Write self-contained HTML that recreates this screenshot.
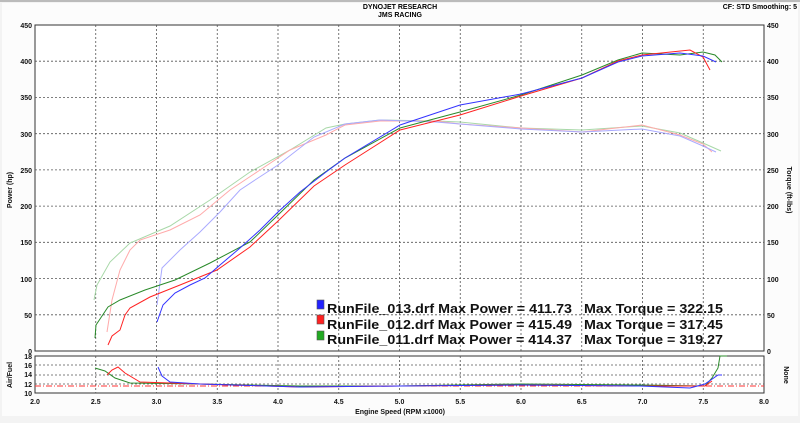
<!DOCTYPE html>
<html><head><meta charset="utf-8"><style>
html,body{margin:0;padding:0;background:#f3f3f3;width:800px;height:423px;overflow:hidden}
svg{display:block}
text{font-family:"Liberation Sans",sans-serif}
</style></head><body>
<svg width="800" height="423" viewBox="0 0 800 423">
<rect x="0" y="0" width="800" height="423" fill="#f3f3f3"/>
<rect x="0" y="0" width="800" height="2" fill="#bbb"/>
<rect x="2" y="3" width="796" height="413" fill="#fcfcfc"/>
<text x="400" y="9" font-size="7" font-weight="bold" text-anchor="middle">DYNOJET RESEARCH</text>
<text x="400" y="17" font-size="7" font-weight="bold" text-anchor="middle">JMS RACING</text>
<text x="797" y="9" font-size="7" font-weight="bold" text-anchor="end">CF: STD  Smoothing: 5</text>
<rect x="35" y="25" width="729" height="326" fill="#fff" stroke="#333" stroke-width="1"/>
<g stroke="#555" stroke-dasharray="2,2" stroke-width="0.8">
<line x1="95.75" y1="25" x2="95.75" y2="351"/><line x1="156.5" y1="25" x2="156.5" y2="351"/><line x1="217.25" y1="25" x2="217.25" y2="351"/><line x1="278" y1="25" x2="278" y2="351"/><line x1="338.75" y1="25" x2="338.75" y2="351"/><line x1="399.5" y1="25" x2="399.5" y2="351"/><line x1="460.25" y1="25" x2="460.25" y2="351"/><line x1="521" y1="25" x2="521" y2="351"/><line x1="581.75" y1="25" x2="581.75" y2="351"/><line x1="642.5" y1="25" x2="642.5" y2="351"/><line x1="703.25" y1="25" x2="703.25" y2="351"/>
<line x1="35" y1="61.2" x2="764" y2="61.2"/><line x1="35" y1="97.4" x2="764" y2="97.4"/><line x1="35" y1="133.7" x2="764" y2="133.7"/><line x1="35" y1="169.9" x2="764" y2="169.9"/><line x1="35" y1="206.1" x2="764" y2="206.1"/><line x1="35" y1="242.3" x2="764" y2="242.3"/><line x1="35" y1="278.6" x2="764" y2="278.6"/><line x1="35" y1="314.8" x2="764" y2="314.8"/>
</g>
<g font-size="7" font-weight="bold" fill="#111">
<text x="32" y="28" text-anchor="end">450</text><text x="32" y="64" text-anchor="end">400</text><text x="32" y="100" text-anchor="end">350</text><text x="32" y="137" text-anchor="end">300</text><text x="32" y="173" text-anchor="end">250</text><text x="32" y="209" text-anchor="end">200</text><text x="32" y="245" text-anchor="end">150</text><text x="32" y="282" text-anchor="end">100</text><text x="32" y="318" text-anchor="end">50</text><text x="32" y="354" text-anchor="end">0</text>
<text x="767" y="28">450</text><text x="767" y="64">400</text><text x="767" y="100">350</text><text x="767" y="137">300</text><text x="767" y="173">250</text><text x="767" y="209">200</text><text x="767" y="245">150</text><text x="767" y="282">100</text><text x="767" y="318">50</text><text x="767" y="354">0</text>
<text transform="translate(12,190) rotate(-90)" text-anchor="middle">Power (hp)</text>
<text transform="translate(787,190) rotate(90)" text-anchor="middle">Torque (ft-lbs)</text>
</g>
<g fill="none" stroke-width="1">
<polyline stroke="#a8d8a8" points="94,300 97,285 110,262 130,243 170,226 210,200 250,172 290,150 326,128 345,124 380,120 436,121 460,122 521,128 582,130 642,126 680,133 703,143 721,151"/>
<polyline stroke="#ffaaaa" points="107,332 112,300 120,270 130,250 140,240 170,230 200,215 230,190 260,170 290,150 326,135 345,125 380,121 436,121 460,124 521,128 582,132 642,125 680,135 703,144 712,152"/>
<polyline stroke="#aaaaff" points="157,305 162,268 180,250 200,232 220,212 240,190 255,180 278,165 314,137 345,124 380,120 436,122 460,124 521,129 582,132 642,129 680,136 703,146 716,152"/>
</g>
<g fill="none" stroke-width="1">
<polyline stroke="#2a8a2a" points="95,338 96,325 108,307 120,300 145,290 175,280 210,263 250,242 278,215 314,180 345,158 400,128 460,112 521,95 582,75 618,60 642,53 680,55 703,52 715,55 722,62"/>
<polyline stroke="#ff2222" points="108,345 112,336 120,330 125,315 130,308 150,297 180,285 217,270 250,247 278,221 314,186 345,165 400,130 460,115 521,96 582,78 618,61 642,55 690,50 703,57 710,70"/>
<polyline stroke="#3333ff" points="157,322 163,305 175,293 190,285 205,278 220,265 240,248 260,230 278,212 300,192 326,172 345,158 400,125 460,105 521,94 582,78 618,62 642,56 680,53 703,56 716,62"/>
</g>
<g font-size="13" font-weight="bold" fill="#111">
<rect x="317" y="300" width="7" height="9" fill="#22f" stroke="#555" stroke-width="0.6"/>
<rect x="317" y="315" width="7" height="9" fill="#f22" stroke="#555" stroke-width="0.6"/>
<rect x="317" y="331" width="7" height="9" fill="#2a2" stroke="#555" stroke-width="0.6"/>
<text x="327" y="313" textLength="245" lengthAdjust="spacingAndGlyphs">RunFile_013.drf Max Power = 411.73</text>
<text x="584" y="313" textLength="139" lengthAdjust="spacingAndGlyphs">Max Torque = 322.15</text>
<text x="327" y="329" textLength="245" lengthAdjust="spacingAndGlyphs">RunFile_012.drf Max Power = 415.49</text>
<text x="584" y="329" textLength="139" lengthAdjust="spacingAndGlyphs">Max Torque = 317.45</text>
<text x="327" y="344" textLength="245" lengthAdjust="spacingAndGlyphs">RunFile_011.drf Max Power = 414.37</text>
<text x="584" y="344" textLength="139" lengthAdjust="spacingAndGlyphs">Max Torque = 319.27</text>
</g>
<rect x="35" y="356" width="729" height="37" fill="#fff" stroke="#333"/>
<g stroke="#555" stroke-dasharray="2,2" stroke-width="0.8">
<line x1="95.75" y1="356" x2="95.75" y2="393"/><line x1="156.5" y1="356" x2="156.5" y2="393"/><line x1="217.25" y1="356" x2="217.25" y2="393"/><line x1="278" y1="356" x2="278" y2="393"/><line x1="338.75" y1="356" x2="338.75" y2="393"/><line x1="399.5" y1="356" x2="399.5" y2="393"/><line x1="460.25" y1="356" x2="460.25" y2="393"/><line x1="521" y1="356" x2="521" y2="393"/><line x1="581.75" y1="356" x2="581.75" y2="393"/><line x1="642.5" y1="356" x2="642.5" y2="393"/><line x1="703.25" y1="356" x2="703.25" y2="393"/>
<line x1="35" y1="365" x2="764" y2="365"/><line x1="35" y1="375" x2="764" y2="375"/><line x1="35" y1="384" x2="764" y2="384"/>
</g>
<line x1="35" y1="386" x2="764" y2="386" stroke="#f33" stroke-dasharray="6,2,1,2" stroke-width="1"/>
<g fill="none" stroke-width="1">
<polyline stroke="#2a8a2a" points="95,368 105,371 115,378 130,383 200,384 300,386 400,386 520,384 640,385 705,386 712,378 718,368 720,356 727,356"/>
<polyline stroke="#ff2222" points="107,375 112,370 118,367 125,373 140,382 200,384 300,387 400,386 520,385 640,386 705,386 712,381"/>
<polyline stroke="#3333ff" points="158,367 162,376 170,382 200,384 300,387 400,386 520,385 640,386 690,388 705,384 718,375 722,375"/>
</g>
<g font-size="7" font-weight="bold" fill="#111">
<text x="32" y="359" text-anchor="end">18</text><text x="32" y="368" text-anchor="end">16</text><text x="32" y="377" text-anchor="end">14</text><text x="32" y="387" text-anchor="end">12</text><text x="32" y="396" text-anchor="end">10</text>
<text transform="translate(12,375) rotate(-90)" text-anchor="middle">Air/Fuel</text>
<text transform="translate(784,375) rotate(90)" text-anchor="middle">None</text>
<text x="35" y="404" text-anchor="middle">2.0</text><text x="95.75" y="404" text-anchor="middle">2.5</text><text x="156.5" y="404" text-anchor="middle">3.0</text><text x="217.25" y="404" text-anchor="middle">3.5</text><text x="278" y="404" text-anchor="middle">4.0</text><text x="338.75" y="404" text-anchor="middle">4.5</text><text x="399.5" y="404" text-anchor="middle">5.0</text><text x="460.25" y="404" text-anchor="middle">5.5</text><text x="521" y="404" text-anchor="middle">6.0</text><text x="581.75" y="404" text-anchor="middle">6.5</text><text x="642.5" y="404" text-anchor="middle">7.0</text><text x="703.25" y="404" text-anchor="middle">7.5</text><text x="764" y="404" text-anchor="middle">8.0</text>
<text x="400" y="414" text-anchor="middle">Engine Speed (RPM x1000)</text>
</g>
</svg>
</body></html>
